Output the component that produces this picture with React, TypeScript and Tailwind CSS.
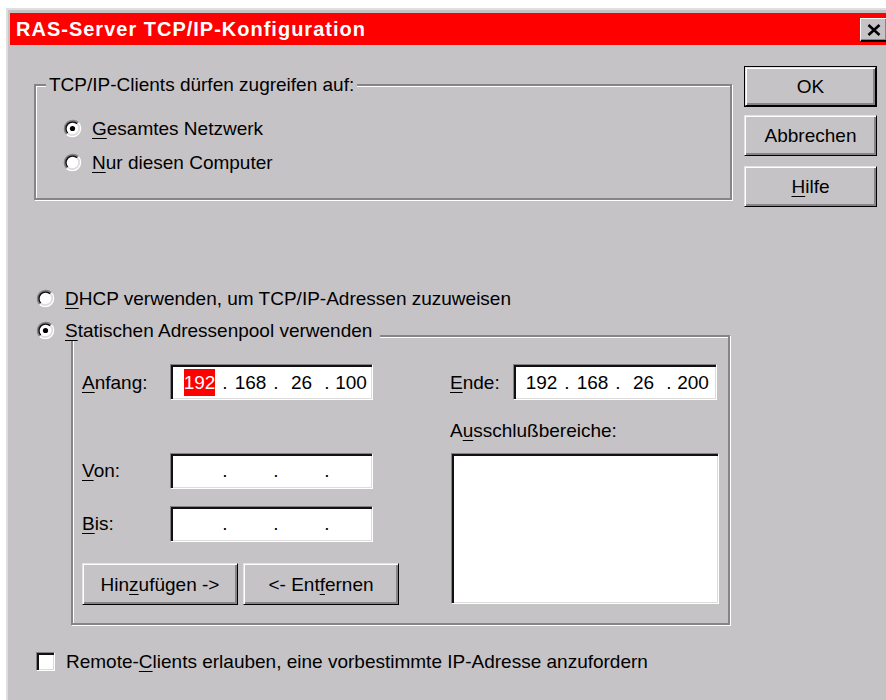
import type { ReactNode } from 'react'

// Win9x/NT style dialog pieces
const etched = 'border-2 border-[#868486] shadow-[inset_1px_1px_0_#fff,1px_1px_0_#fff]'
const sunken =
  'bg-white border border-t-[#848284] border-l-[#848284] border-b-white border-r-white shadow-[inset_2px_2px_0_#111,inset_-1px_-1px_0_#dcdcdc]'
const raised =
  'bg-[#c6c3c6] border border-t-[#e4e4e4] border-l-[#e4e4e4] border-b-black border-r-black shadow-[inset_1px_1px_0_#fff,inset_-2px_-2px_0_#868486]'

function U({ children }: { children: ReactNode }) {
  return <span className="underline underline-offset-[3px] decoration-1">{children}</span>
}

function Radio({ checked }: { checked?: boolean }) {
  return (
    <svg width="19" height="19" viewBox="0 0 19 19" className="shrink-0">
      <circle cx="9.5" cy="9.5" r="7" fill="#fff" />
      <path d="M3.67 15.33 A8.25 8.25 0 0 1 15.33 3.67" fill="none" stroke="#848284" strokeWidth="1.5" />
      <path d="M15.33 3.67 A8.25 8.25 0 0 1 3.67 15.33" fill="none" stroke="#fff" strokeWidth="1.5" />
      <path d="M4.73 14.27 A6.75 6.75 0 0 1 14.27 4.73" fill="none" stroke="#111" strokeWidth="1.5" />
      <path d="M14.27 4.73 A6.75 6.75 0 0 1 4.73 14.27" fill="none" stroke="#dcdcdc" strokeWidth="1.5" />
      {checked && <circle cx="9.5" cy="9.5" r="2.6" fill="#000" />}
    </svg>
  )
}

function IpField({ parts, selectFirst, pad, w }: { parts: string[]; selectFirst?: boolean; pad: string; w: string }) {
  const segs = ['w-[41px]', 'w-[41px]', 'w-[41px]', 'w-[38px]']
  return (
    <div className={`${sunken} ${w} h-[36px] flex items-center overflow-hidden ${pad}`}>
      {parts.map((p, i) => (
        <div key={i} className="flex items-center">
          <span className={`${segs[i]} text-center`}>
            {i === 0 && selectFirst ? <span className="bg-[#ff0000] text-white py-[3px]">{p}</span> : p}
          </span>
          {i < 3 && <span className="w-[10px] text-center">.</span>}
        </div>
      ))}
    </div>
  )
}

function Button({ children, className = '' }: { children: ReactNode; className?: string }) {
  return <div className={`${raised} flex items-center justify-center ${className}`}>{children}</div>
}

export default function App() {
  return (
    <div className="w-[886px] h-[700px] bg-white overflow-hidden font-['Liberation_Sans',Arial,sans-serif] text-[19px] text-black leading-none">
      <div className="ml-[6px] mt-[8px] w-[880px] h-[692px] border-l-2 border-t-2 border-[#dfdfdf] bg-[#c6c3c6] pl-[2px] pt-[3px]">
        {/* title bar */}
        <div className="h-[32px] bg-[#ff0000] flex items-start justify-between">
          <div className="h-full flex items-center pl-[6px] text-white font-bold text-[20px] tracking-[1px]">
            RAS-Server TCP/IP-Konfiguration
          </div>
          <div className="mt-[5px] w-[26px] h-[24px] bg-[#c6c3c6] border-t border-l border-white border-b-2 border-b-black shadow-[inset_-1px_-1px_0_#868486] flex items-center justify-center">
            <svg width="14" height="12" viewBox="0 0 14 12">
              <path d="M1.5 1 L12.5 11 M12.5 1 L1.5 11" stroke="#000" strokeWidth="2.6" />
            </svg>
          </div>
        </div>

        {/* top row: access group + dialog buttons */}
        <div className="flex h-[162px]">
          <div className={`${etched} ml-[24px] mt-[39px] w-[698px] h-[116px] flex flex-col`}>
            <div className="-mt-[13px] ml-[10px] self-start px-[3px] h-[22px] flex items-center bg-[#c6c3c6]">
              TCP/IP-Clients dürfen zugreifen auf:
            </div>
            <div className="mt-[22px] ml-[27px] h-[22px] flex items-center gap-[10px]">
              <Radio checked />
              <span><U>G</U>esamtes Netzwerk</span>
            </div>
            <div className="mt-[12px] ml-[27px] h-[22px] flex items-center gap-[10px]">
              <Radio />
              <span><U>N</U>ur diesen Computer</span>
            </div>
          </div>
          <div className="ml-[12px] mt-[21px] flex flex-col">
            <div className="border border-black w-[133px] h-[41px] flex">
              <Button className="flex-1">OK</Button>
            </div>
            <Button className="mt-[8px] w-[133px] h-[41px]">Abbrechen</Button>
            <Button className="mt-[10px] w-[133px] h-[41px]"><span><U>H</U>ilfe</span></Button>
          </div>
        </div>

        <div className="mt-[80px] ml-[26px] h-[22px] flex items-center gap-[10px]">
          <Radio />
          <span><U>D</U>HCP verwenden, um TCP/IP-Adressen zuzuweisen</span>
        </div>

        {/* static pool group */}
        <div className={`${etched} mt-[26px] ml-[61px] w-[659px] h-[290px] flex flex-col`}>
          <div className="-mt-[18px] -ml-[37px] self-start pr-[8px] h-[22px] flex items-center gap-[10px] bg-[#c6c3c6]">
            <Radio checked />
            <span><U>S</U>tatischen Adressenpool verwenden</span>
          </div>
          <div className="flex">
            <div className="ml-[9px] w-[368px] flex flex-col">
              <div className="mt-[23px] h-[36px] flex items-center">
                <span className="w-[88px]"><U>A</U>nfang:</span>
                <IpField parts={['192', '168', '26', '100']} selectFirst pad="pl-[8px]" w="w-[203px]" />
              </div>
              <div className="mt-[53px] h-[35px] flex items-center">
                <span className="w-[88px]"><U>V</U>on:</span>
                <IpField parts={['', '', '', '']} pad="pl-[8px]" w="w-[203px]" />
              </div>
              <div className="mt-[18px] h-[35px] flex items-center">
                <span className="w-[88px]"><U>B</U>is:</span>
                <IpField parts={['', '', '', '']} pad="pl-[8px]" w="w-[203px]" />
              </div>
              <div className="mt-[22px] flex gap-[5px]">
                <Button className="w-[156px] h-[42px]"><span>Hin<U>z</U>ufügen -&gt;</span></Button>
                <Button className="w-[156px] h-[42px]"><span>&lt;- Ent<U>f</U>ernen</span></Button>
              </div>
            </div>
            <div className="flex flex-col">
              <div className="mt-[23px] h-[36px] flex items-center">
                <span className="w-[63px]"><U>E</U>nde:</span>
                <IpField parts={['192', '168', '26', '200']} pad="pl-[7px]" w="w-[204px]" />
              </div>
              <div className="mt-[19px] h-[22px] flex items-center">
                <span>A<U>u</U>sschlußbereiche:</span>
              </div>
              <div className={`${sunken} mt-[12px] ml-[1px] w-[268px] h-[151px]`} />
            </div>
          </div>
        </div>

        <div className="mt-[25px] ml-[26px] h-[22px] flex items-center gap-[11px]">
          <div className={`${sunken} w-[19px] h-[19px]`} />
          <span>Remote-<U>C</U>lients erlauben, eine vorbestimmte IP-Adresse anzufordern</span>
        </div>
      </div>
    </div>
  )
}
